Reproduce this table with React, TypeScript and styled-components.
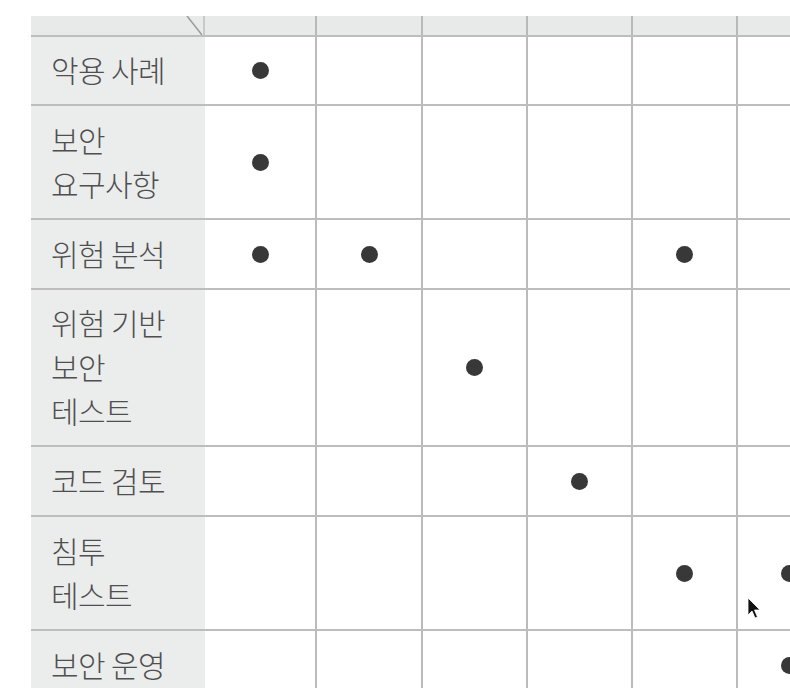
import React from 'react';
import styled, { createGlobalStyle } from 'styled-components';

const GlobalStyle = createGlobalStyle`
  html, body {
    margin: 0;
    padding: 0;
    background: #ffffff;
  }
`;

type Row = {
  label: string[];
  height: number;
  marks: number[];
};

const COLUMNS = '174px 110px 106px 105px 105px 105px 105px';
const MARK_COLUMNS = 6;

const rows: Row[] = [
  { label: ['악용 사례'], height: 69, marks: [0] },
  { label: ['보안', '요구사항'], height: 114, marks: [0] },
  { label: ['위험 분석'], height: 70, marks: [0, 1, 4] },
  { label: ['위험 기반', '보안', '테스트'], height: 157, marks: [2] },
  { label: ['코드 검토'], height: 70, marks: [3] },
  { label: ['침투', '테스트'], height: 114, marks: [4, 5] },
  { label: ['보안 운영'], height: 70, marks: [5] }
];

const Frame = styled.div`
  position: relative;
  width: 790px;
  height: 688px;
  overflow: hidden;
  padding: 16px 0 0 31px;
  box-sizing: border-box;
  font-family: 'Noto Sans CJK KR', 'Noto Sans', sans-serif;
`;

const Matrix = styled.div`
  display: flex;
  flex-direction: column;
  width: 810px;
`;

const HeaderRow = styled.div`
  display: grid;
  grid-template-columns: ${COLUMNS};
  height: 19px;
  background: #e8e9e9;
`;

const CornerCell = styled.div`
  position: relative;
  border-right: 2px solid #c8caca;
  box-sizing: border-box;
`;

const HeaderCell = styled.div<{ $lined: boolean }>`
  box-sizing: border-box;
  border-left: ${({ $lined }) => ($lined ? '2px solid #b9b9b9' : 'none')};
`;

const BodyRow = styled.div<{ $height: number }>`
  display: grid;
  grid-template-columns: ${COLUMNS};
  height: ${({ $height }) => $height}px;
  border-top: 2px solid #bdbdbd;
  box-sizing: border-box;
`;

const LabelCell = styled.div`
  display: flex;
  flex-direction: column;
  justify-content: center;
  padding: 0 0 3px 20px;
  background: #ebecec;
  color: #4f4f4f;
  font-size: 30px;
  line-height: 44px;
  font-weight: 300;
  letter-spacing: -0.6px;
`;

const MarkCell = styled.div<{ $lined: boolean }>`
  display: flex;
  align-items: center;
  justify-content: center;
  box-sizing: border-box;
  border-left: ${({ $lined }) => ($lined ? '2px solid #bbbbbb' : 'none')};
  background: #ffffff;
`;

const Dot = styled.span`
  width: 17px;
  height: 17px;
  border-radius: 50%;
  background: #383838;
`;

const Pointer = styled.svg`
  position: absolute;
  left: 747px;
  top: 597px;
`;

const Corner = () => (
  <CornerCell>
    <svg width='174' height='19' style={{ position: 'absolute', left: 0, top: 0 }}>
      <line x1='156' y1='0' x2='171' y2='19' stroke='#9a9c9c' strokeWidth='1.5' />
    </svg>
  </CornerCell>
);

const App: React.FC = () => {
  const markColumns = Array.from({ length: MARK_COLUMNS }, (_, i) => i);

  return (
    <>
      <GlobalStyle />
      <Frame>
        <Matrix>
          <HeaderRow>
            <Corner />
            {markColumns.map((i) => (
              <HeaderCell key={i} $lined={i > 0} />
            ))}
          </HeaderRow>
          {rows.map((row) => (
            <BodyRow key={row.label.join(' ')} $height={row.height}>
              <LabelCell>
                {row.label.map((line) => (
                  <div key={line}>{line}</div>
                ))}
              </LabelCell>
              {markColumns.map((i) => (
                <MarkCell key={i} $lined={i > 0}>
                  {row.marks.includes(i) && <Dot />}
                </MarkCell>
              ))}
            </BodyRow>
          ))}
        </Matrix>
        <Pointer width='16' height='23' viewBox='0 0 16 23'>
          <path d='M1 1 L1 18 L5 14 L8 21 L10.5 20 L7.5 13 L13 13 Z' fill='#111' stroke='#fff' strokeWidth='0.8' />
        </Pointer>
      </Frame>
    </>
  );
};

export default App;
